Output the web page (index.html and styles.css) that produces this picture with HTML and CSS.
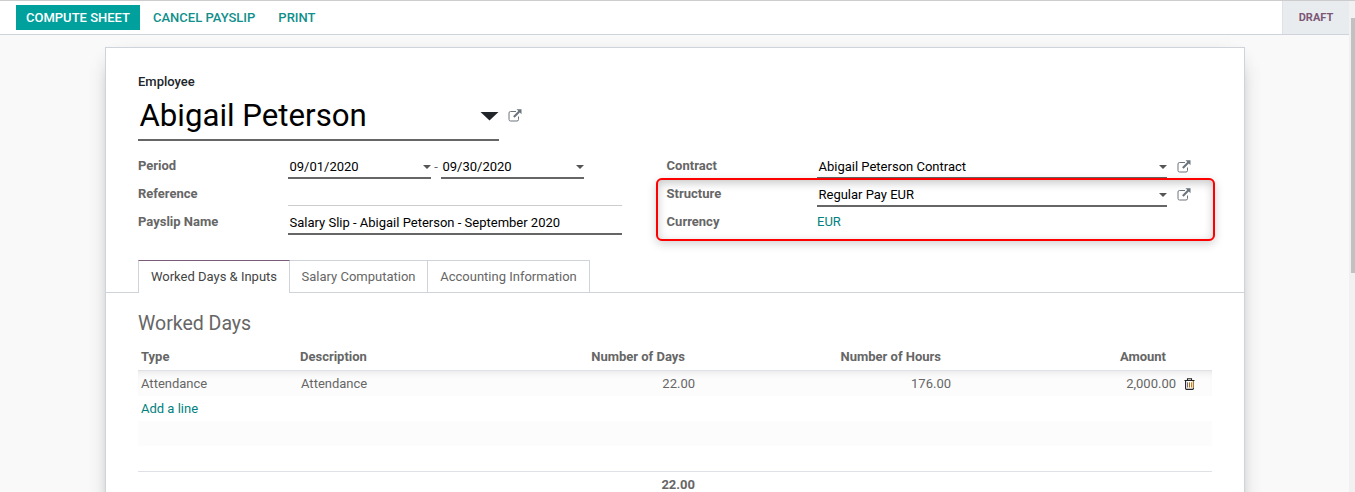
FILE: index.html
```html
<!DOCTYPE html>
<html lang="en">
<head>
<meta charset="utf-8">
<title>Payslip</title>
<link rel="stylesheet" href="styles.css">
</head>
<body>
<svg class="defs" aria-hidden="true">
  <symbol id="external" viewBox="0 0 14 13">
    <path d="M8 2.5H2.5Q1 2.5 1 4v6.5Q1 12 2.5 12h6.5q1.5 0 1.5-1.5V7.5" fill="none" stroke="currentColor" stroke-width="1"/>
    <path d="M8.5 .3H13.5V5.3L11.8 3.6 6.6 8.8 5.1 7.3 10.3 2.1Z" fill="currentColor"/>
  </symbol>
</svg>
<div class="window">
  <div class="main">
    <header class="bar">
      <div class="actions">
        <button class="btn primary">COMPUTE SHEET</button>
        <button class="btn">CANCEL PAYSLIP</button>
        <button class="btn">PRINT</button>
      </div>
      <div class="status">DRAFT</div>
    </header>
    <div class="content">
      <section class="sheet">
        <div class="top">
          <label class="employee-label">Employee</label>
          <div class="employee">
            <div class="employee-input"><span>Abigail Peterson</span><i class="caret big"></i></div>
            <svg class="ext"><use href="#external"/></svg>
          </div>
          <div class="groups">
            <div class="group">
              <div class="row"><label>Period</label><div class="field"><span>09/01/2020</span><i class="caret"></i></div><span class="dash">-</span><div class="field"><span>09/30/2020</span><i class="caret"></i></div></div>
              <div class="row"><label>Reference</label><div class="field wide empty"></div></div>
              <div class="row"><label>Payslip Name</label><div class="field wide name">Salary Slip - Abigail Peterson - September 2020</div></div>
            </div>
            <div class="group right">
              <div class="row"><label>Contract</label><div class="field"><span>Abigail Peterson Contract</span><i class="caret"></i></div><svg class="ext"><use href="#external"/></svg></div>
              <div class="row"><label>Structure</label><div class="field"><span>Regular Pay EUR</span><i class="caret"></i></div><svg class="ext"><use href="#external"/></svg></div>
              <div class="row"><label>Currency</label><a class="link">EUR</a></div>
              <div class="highlight"></div>
            </div>
          </div>
        </div>
        <nav class="tabs">
          <a class="tab active">Worked Days &amp; Inputs</a>
          <a class="tab comp">Salary Computation</a>
          <a class="tab acct">Accounting Information</a>
        </nav>
        <div class="page">
          <h2>Worked Days</h2>
          <div class="line head"><span>Type</span><span>Description</span><span class="num">Number of Days</span><span class="num">Number of Hours</span><span class="num">Amount</span><span></span></div>
          <div class="line striped first"><span>Attendance</span><span class="desc">Attendance</span><span class="num">22.00</span><span class="num">176.00</span><span class="num">2,000.00</span>
            <svg class="trash" viewBox="0 0 11 12"><path d="M.5 2.5h10M3.5 2V.7h4V2" fill="none" stroke="#222" stroke-width="1.1"/><path d="M1.6 3v7.6q0 .8.8.8h6.2q.8 0 .8-.8V3" fill="#fff" stroke="#222" stroke-width="1.1"/><path d="M3.6 4.3v5.2" stroke="#657"/><path d="M5.5 4.3v5.2" stroke="#a77018"/><path d="M7.5 4.3v5.2" stroke="#c78016"/><path d="M9.5 3v7" stroke="#b57a18"/></svg>
          </div>
          <div class="line"><a class="link">Add a line</a></div>
          <div class="line striped"></div>
          <div class="line"></div>
          <div class="line foot"><span></span><span></span><span class="num">22.00</span></div>
        </div>
      </section>
    </div>
  </div>
  <div class="scrollbar"><div class="thumb"></div></div>
</div>
</body>
</html>
```
FILE: styles.css
```css
* { box-sizing: border-box; }
body {
  margin: 0;
  font: 13px/20px Roboto, "Liberation Sans", sans-serif;
  color: #666;
  background: #f9f9f9;
  overflow: hidden;
}
.defs { display: none; }
.window { display: flex; height: 492px; border-top: 1px solid #ccc; overflow: hidden; white-space: nowrap; }
.main { width: 1349px; overflow: hidden; }
.scrollbar { flex: 1; background: #f1f1f1; padding: 17px 0 0 2px; }
.thumb { height: 255px; background: #c1c1c1; }

.bar { display: flex; justify-content: space-between; height: 34px; background: #fff; border-bottom: 1px solid #ced4da; }
.actions { display: flex; padding: 4px 0 0 16px; gap: 3px; }
.btn { height: 25px; padding: 0 10px; border: 0; background: none; color: #108f8b; font: 500 13px/25px Roboto, sans-serif; }
.btn.primary { width: 124px; background: #00a09d; color: #fff; }
.status { width: 67px; background: #e9ecef; border-left: 1px solid #dee2e6; color: #7c5775; font-weight: 700; font-size: 11px; line-height: 33px; text-align: center; }

.content { padding: 12px 104px 0 105px; }
.sheet { width: 1140px; height: 500px; background: #fff; border: 1px solid #ced4da; box-shadow: 0 5px 20px -15px rgba(0,0,0,.7), 0 10px 22px -6px rgba(0,0,0,.16); }
.top { height: 212px; padding: 24px 32px 0; }
label { font-weight: 700; color: #666; }
.employee-label { display: block; color: #212529; font-weight: 500; }
.employee { display: flex; align-items: flex-start; gap: 9px; height: 62px; }
.employee-input { display: flex; align-items: center; justify-content: space-between; width: 361px; height: 49px; padding: 1px 0 0 1.5px; border-bottom: 2px solid #666; color: #000; font-size: 31.2px; }
.employee > .ext { margin-top: 17px; }
.ext { flex: none; width: 14px; height: 13px; color: #6c757d; }
.caret { width: 8px; height: 4px; background: #555; clip-path: polygon(0 0, 100% 0, 50% 100%); }
.caret.big { width: 19px; height: 9px; background: #212529; }

.groups { display: flex; }
.group { width: 529px; }
.right { position: relative; }
.row { display: flex; height: 28px; }
.row label { width: 150px; flex: none; padding-top: 2px; }
.field { display: flex; align-items: center; justify-content: space-between; width: 143px; height: 25px; padding: 3px 0 0 1.5px; border-bottom: 2px solid #666; color: #000; }
.field.wide { width: 334px; }
.field.empty { height: 24px; border-bottom: 1px solid #ccc; }
.dash { width: 10px; text-align: center; line-height: 26px; }
.right .field { width: 350px; }
.right label { text-indent: -.4px; }
.right .ext { margin: 6px 0 0 10px; }
.link { color: #01817e; }
.row .link { padding-top: 2px; }
.highlight { position: absolute; left: -11px; top: 24px; width: 559px; height: 63px; border: 2px solid #f00; outline: 1px solid #ff000066; outline-offset: -1px; border-radius: 6px; box-shadow: 0 3px 10px rgba(0,0,0,.18), inset 0 3px 10px rgba(0,0,0,.22); }

.tabs { display: flex; height: 33px; padding-left: 32px; border-bottom: 1px solid #ced4da; }
.tab { height: 32px; border: 1px solid #ced4da; border-left: 0; border-bottom: 0; line-height: 31px; text-align: center; }
.tab.active { width: 152px; height: 33px; border-left: 1px solid #ced4da; border-top-color: #7c5a7a; background: #fff; color: #444; }
.comp { width: 138px; }
.acct { width: 162px; }

.page { padding: 19px 32px 0; }
h2 { margin: 0 0 7px; font-size: 19.5px; font-weight: 400; line-height: 24px; }
.line { display: grid; grid-template-columns: 159px 238px 157px 256px 225px 36px; width: 1074px; height: 25px; line-height: 25px; padding-left: 3px; }
.num { text-align: right; }
.head { height: 28px; line-height: 27px; font-weight: 700; border-bottom: 1px solid #dee2e6; }
.head .num { padding-right: 10px; }
.desc { padding-left: 1px; }
.striped { background: #fcfcfc; }
.first { box-shadow: inset 0 7px 8px -6px rgba(0,0,0,.1); }
.trash { width: 11px; height: 12px; margin: 7px 0 0 8px; }
.foot { border-top: 1px solid #dee2e6; font-weight: 700; }
```
